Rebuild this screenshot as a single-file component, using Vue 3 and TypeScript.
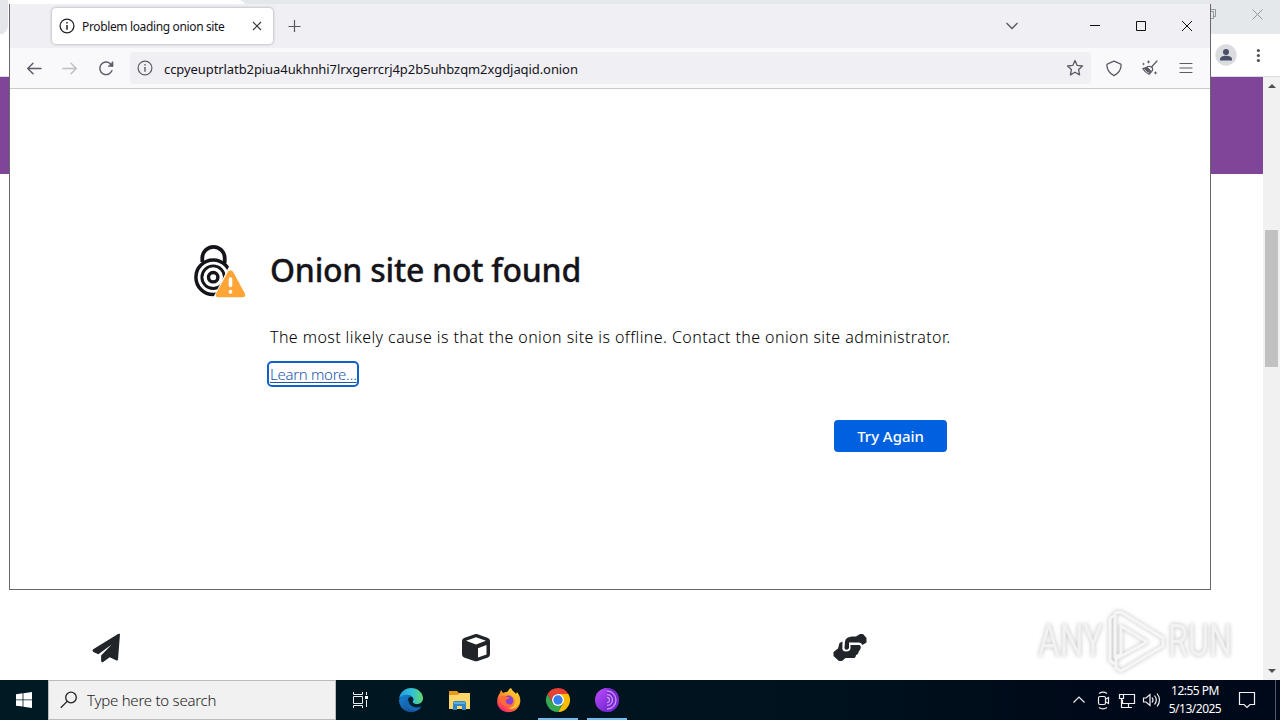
<script setup lang="ts">
interface TaskApp {
  name: string
  running: boolean
}

const address: string = 'ccpyeuptrlatb2piua4ukhnhi7lrxgerrcrj4p2b5uhbzqm2xgdjaqid.onion'
const apps: TaskApp[] = [
  { name: 'edge', running: false },
  { name: 'files', running: false },
  { name: 'firefox', running: false },
  { name: 'chrome', running: true },
  { name: 'tor', running: true },
]
</script>

<template>
  <div class="desktop">
    <section class="back">
      <header class="back-tabs">
        <i class="back-edge"></i>
        <i class="back-tab"></i>
        <i class="back-strip"></i>
        <svg class="back-controls" width="80" height="34" viewBox="1200 0 80 34" fill="none" stroke="#929599">
          <path d="M1207.5 11.500h6v7h-6zM1209.500 11.500v-2h6v7h-2" />
          <path d="M1252.500 9.500l10 10M1262.500 9.500l-10 10" />
        </svg>
      </header>
      <div class="back-toolbar">
        <svg width="80" height="42" viewBox="1200 34 80 42">
          <circle cx="1226" cy="55" r="10.700" fill="#dadce0" />
          <circle cx="1226" cy="51.900" r="3" fill="#4a4f68" />
          <path d="M1220 60.500v-1.300c0-4.600 12-4.600 12 0v1.300z" fill="#4a4f68" />
          <g fill="#505358"><circle cx="1258.400" cy="50.500" r="1.600" /><circle cx="1258.400" cy="55.500" r="1.600" /><circle cx="1258.400" cy="60.500" r="1.600" /></g>
        </svg>
      </div>
      <div class="back-body">
        <main class="page">
          <div class="banner"></div>
          <div class="features">
            <svg class="plane" width="30" height="30" viewBox="0 0 30 30">
              <path fill="#212529" d="M29 1L27 26.500Q26.800 28 25 27.200L18.700 24.300L12.200 29Q10 30 10.100 27.500V22.500L20.700 11.500L7.300 21.200L2.300 18.900Q.5 17.600 2.200 16.300L27 1.100Q28.200.3 29 1Z" />
            </svg>
            <svg class="cube" width="30" height="30" viewBox="0 0 30 30">
              <path fill="#212529" fill-rule="evenodd" d="M14.500 1Q15 .8 16 1.100L27 5Q29 5.800 29 8V21.500Q29 23.700 27 24.600L16 28.200Q15 28.500 14 28.200L3 24.600Q1 23.700 1 21.500V8Q1 5.800 3 5L14.500 1ZM15 4.300L5 7.800L15 11.500L25 7.800ZM17 15.200V24.600L25.500 21.600V12.100Z" />
            </svg>
            <svg class="hands" width="34" height="30" viewBox="0 0 34 30">
              <g fill="#212529">
                <path d="M.5 19L5 15.500L6.500 10L9.500 8.500L9.300 15.500Q9.500 18.500 13 18.500Q17 18.500 17.500 15.500V12L26.500 12Q28 12.500 27.800 14.500L27 17Q25.500 17.500 25.500 19.500Q25 21.500 23 22Q23 24 21.500 25H12.500L9 28H6L.5 23Z" />
                <path d="M12 8.500Q12.300 5.500 15 4.500L18.500 3.500L23 3.500L27 1H30L33.500 5V9.500L29.500 12Q28.500 9.500 26 9.500H16V15Q15.500 16.800 13.500 16.800Q11.500 16.500 11.500 15Z" />
              </g>
            </svg>
          </div>
        </main>
        <aside class="scroll">
          <i class="arrow up"></i><i class="thumb"></i><i class="arrow down"></i>
        </aside>
      </div>
    </section>

    <section class="window">
      <header class="tabbar">
        <div class="tab">
          <svg width="16" height="16" viewBox="0 0 16 16" fill="none" stroke="#222229" stroke-width="1.300"><circle cx="8" cy="8" r="6.900" /><path d="M8 7v4.800M8 4v1.600" stroke-width="1.500" /></svg>
          <span class="tab-title">Problem loading onion site</span>
          <svg class="tab-close" width="10" height="10" viewBox="0 0 10 10" fill="none" stroke="#35353d" stroke-width="1.100"><path d="M1 1l8 8M9 1L1 9" /></svg>
        </div>
        <svg class="plus" width="14" height="14" viewBox="0 0 14 14" stroke="#56565e" stroke-width="1.200"><path d="M6.500 1v12M.5 7.500h12" /></svg>
        <svg class="controls" width="210" height="44" viewBox="1000 4 210 44" fill="none">
          <path d="M1006.500 23l5.500 5.500 5.500-5.500" stroke="#56565e" stroke-width="1.300" />
          <g stroke="#111"><path d="M1090 25.500h10M1136.500 21.500h9v9h-9zM1182 21l10 10M1192 21l-10 10" /></g>
        </svg>
      </header>
      <div class="toolbar">
        <svg width="120" height="40" viewBox="10 48 120 40" fill="none" stroke="#5b5b66" stroke-width="1.400" stroke-linecap="round" stroke-linejoin="round">
          <path d="M41 68.500H27.800M33 63.200l-5.300 5.300 5.300 5.300" />
          <path d="M63 68.500h13.200M71 63.200l5.300 5.300-5.300 5.300" stroke="#bdbdc3" />
          <path d="M112 70.600a6.300 6.300 0 1 1-1.600-6.900l2.100 2.100" /><path d="M113 61.800v4.600h-4.600z" fill="#5b5b66" stroke-width=".6" />
        </svg>
        <div class="urlbar">
          <svg width="16" height="16" viewBox="0 0 16 16" fill="none" stroke="#5b5b66" stroke-width="1.200"><circle cx="8" cy="8" r="6.900" /><path d="M8 7v4.800M8 4v1.600" stroke-width="1.400" /></svg>
          <span class="address">{{ address }}</span>
          <svg class="star" width="18" height="18" viewBox="0 0 18 18" fill="none" stroke="#5b5b66" stroke-width="1.300" stroke-linejoin="round"><path d="M9 1.500l2.200 4.900 5.300.6-3.900 3.600 1 5.300L9 13.300l-4.600 2.600 1-5.300L1.500 7l5.300-.6z" /></svg>
        </div>
        <svg width="119" height="40" viewBox="1091 48 119 40" fill="none" stroke="#5b5b66" stroke-width="1.300" stroke-linecap="round">
          <path d="M1114 61.200l6.300 2.600c.9.400 1 1.200.8 2.100-.5 4.400-2.900 7.700-7.100 9.800-4.200-2.100-6.600-5.400-7.100-9.800-.2-.9-.1-1.700.8-2.100z" stroke-linejoin="round" />
          <path d="M1157 61l-5.500 6" />
          <path d="M1147.500 66.500q3-.8 4.800 1.200 1 2-.5 3.700l-2.500 2.800M1143 68.700q2 3.800 6 5.600l1.500-3.300-3.700-3.700zM1145 68.500l2.500 3" stroke-width="1.200" />
          <path d="M1144.500 68.700l2.500-1.700 3.300 3.500-1.300 2.500z" fill="#5b5b66" stroke="none" />
          <g stroke="none" fill="#5b5b66"><path d="M1148.500 60l.6 1.300 1.300.6-1.300.6-.6 1.300-.6-1.300-1.300-.6 1.300-.6zM1143.500 62.500l.5 1 1 .5-1 .5-.5 1-.5-1-1-.5 1-.5zM1155.500 71l.6 1.300 1.300.6-1.300.6-.6 1.300-.6-1.300-1.300-.6 1.300-.6z" /></g>
          <path d="M1180 63.500h12M1180 68h12M1180 72.500h12" stroke-width="1.200" />
        </svg>
      </div>
      <main class="error">
        <svg class="error-icon" width="54" height="54" viewBox="0 0 54 54" fill="none">
          <g stroke="#15141a">
            <path d="M9.300 18V14a11.200 11.200 0 0 1 22.400 0v5" stroke-width="3.800" />
            <circle cx="20.200" cy="33.200" r="17.300" stroke-width="3.500" />
            <circle cx="20.200" cy="33.200" r="11.300" stroke-width="2.900" />
            <circle cx="20.200" cy="33.200" r="4.700" stroke-width="3.400" />
          </g>
          <path d="M36 22.500L20 54H54V22.500Z" fill="#fff" />
          <path d="M37.500 26.300Q39.300 26.300 40.200 28L51.900 49.500Q53.200 53.200 49.700 53.200H25.300Q21.800 53.200 23.100 49.500L34.800 28Q35.700 26.300 37.500 26.300Z" fill="#ffa537" />
          <path d="M37.500 35v6.500M37.500 47.500v.4" stroke="#fff" stroke-width="3.600" stroke-linecap="round" />
        </svg>
        <div class="message">
          <h1><span>Onion site not found</span></h1>
          <p class="cause">The most likely cause is that the onion site is offline. Contact the onion site administrator.</p>
          <a class="learn"><span>Learn more…</span></a>
          <button class="retry">Try Again</button>
        </div>
      </main>
    </section>

    <div class="watermark">
      <span class="mark">ANY</span>
      <svg width="60" height="72" viewBox="1106 605 60 72">
        <g class="play" fill="none" stroke-linejoin="round">
          <path d="M1121 612l42 26v8l-42 25-5-3v-9l31-17-26-16v28l-6 3v-44z" />
          <path d="M1110 618v43l7 4M1110 618l6-3" />
        </g>
      </svg>
      <span class="mark">RUN</span>
    </div>

    <footer class="taskbar">
      <div class="start">
        <svg width="16" height="16" viewBox="0 0 16 16" fill="#fff"><path d="M0 2.200l6.600-.9v6.200H0zM7.400 1.200L16 0v7.500H7.400zM0 8.300h6.600v6.300L0 13.700zM7.400 8.300H16V16l-8.600-1.200z" /></svg>
      </div>
      <div class="search">
        <svg width="18" height="18" viewBox="0 0 18 18" fill="none" stroke="#222" stroke-width="1.300"><circle cx="11" cy="6.500" r="5.300" /><path d="M7.100 10.400L.8 16.800" /></svg>
        <span>Type here to search</span>
      </div>
      <div class="cell taskview">
        <svg width="17" height="17" viewBox="0 0 17 17" fill="none" stroke="#eee"><path d="M1.500 5.500h9v7h-9zM1.500 1v2.500h9V1M1.500 17v-2.500h9V17M14.500 1v3M14.500 9v7" /><path d="M13 5h3v3h-3z" fill="#fff" stroke="none" /></svg>
      </div>
      <div v-for="app in apps" :key="app.name" class="cell" :class="{ running: app.running }">
        <svg v-if="app.name === 'edge'" width="26" height="26" viewBox="0 0 26 26">
          <defs>
            <linearGradient id="edge-top" x1="0" x2="1"><stop stop-color="#249be0" /><stop offset=".55" stop-color="#31c2d5" /><stop offset="1" stop-color="#65d66b" /></linearGradient>
            <linearGradient id="edge-low" x1="0" x2="1" y1="0" y2="1"><stop stop-color="#168bdc" /><stop offset="1" stop-color="#123e80" /></linearGradient>
          </defs>
          <path d="M1 13A12 12 0 0 1 15 5l6 9 2.500 5A12 12 0 0 1 1 13Z" fill="url(#edge-low)" />
          <path d="M1 12C2 5 7 1 13 1c7 0 12 5 12 10 0 4-3 6-6 6-3 0-5-1-4-3 1-1 .5-5-4-6C7 7 3 8 1 12Z" fill="url(#edge-top)" />
          <path d="M10 13c0-2.500 3-4.500 5-2 1 1.500 0 2.500-.5 3.500 0 2 3 3 6 2.500l3.500-1-1 3.500C18 22 10 20 10 13Z" fill="#03202f" />
          <path d="M10 12c-4 5 0 12 7 12 3-.5 5-2 6-4-6 2-12.500-1-13-8Z" fill="#1768af" />
        </svg>
        <svg v-else-if="app.name === 'files'" width="24" height="24" viewBox="0 0 24 24">
          <path d="M1 3h8l2 2h11v5H1z" fill="#e69a19" /><path d="M1 7h9l2-2h10v16H1z" fill="#ffd768" /><path d="M5 22v-7q0-2 2-2h9q2 0 2 2v7h-4v-4H9v4z" fill="#3187c5" /><path d="M6 14h11v2H6z" fill="#59addf" />
        </svg>
        <svg v-else-if="app.name === 'firefox'" width="26" height="26" viewBox="0 0 26 26">
          <defs><linearGradient id="fox" x1=".85" y1="0" x2=".15" y2="1"><stop stop-color="#ffe83c" /><stop offset=".45" stop-color="#ff9826" /><stop offset=".8" stop-color="#ff4354" /><stop offset="1" stop-color="#e5178c" /></linearGradient></defs>
          <path d="M15 1c1 3 4 4 5 6l1-2c4 5 4 10 2 14a12 12 0 0 1-21 0C0 14 2 8 4 6l1-3 2 3c1-1 3-1 4-1 1-1 2-3 4-4Z" fill="url(#fox)" />
          <circle cx="12.500" cy="13.500" r="5" fill="#8b3fd2" /><path d="M4 10c3-2 5 0 8 0l2 1-4 2c-1 3 2 5 5 4-3 5-12 2-11-7Z" fill="#ff6b38" /><path d="M12 6c3 0 6 2 7 5 2 5-2 10-7 10 5 3 12-1 11-8-1-5-5-7-8-11z" fill="#ffbd2d" />
        </svg>
        <svg v-else-if="app.name === 'chrome'" width="26" height="26" viewBox="0 0 26 26">
          <path d="M13 13V7h10.400A12 12 0 0 1 13 25l5.200-9Z" fill="#fbbc04" /><path d="M13 25A12 12 0 0 1 2.600 7l5.200 9 5.200 3 5.200-3Z" fill="#34a853" />
          <path d="M2.600 7A12 12 0 0 1 23.400 7H13a6 6 0 0 0-5.200 9Z" fill="#e94235" />
          <circle cx="13" cy="13" r="6" fill="#fff" /><circle cx="13" cy="13" r="4.700" fill="#347ef0" />
        </svg>
        <svg v-else width="26" height="26" viewBox="0 0 26 26">
          <defs><linearGradient id="onion" x2="1" y2="1"><stop stop-color="#c34cff" /><stop offset="1" stop-color="#581ac0" /></linearGradient></defs>
          <circle cx="13" cy="13" r="12" fill="url(#onion)" /><path d="M13 1a12 12 0 0 1 0 24z" fill="#7a2bd0" />
          <g fill="none" stroke="#cf93ff" stroke-width="1.300"><path d="M13 4a9 9 0 0 1 0 18M13 7.500a5.500 5.500 0 0 1 0 11M13 10.500a2.500 2.500 0 0 1 0 5" /></g>
        </svg>
      </div>
      <svg class="tray" width="96" height="40" viewBox="1067 680 96 40" fill="none" stroke="#eee" stroke-width="1.200">
        <path d="M1073.500 702.500l5.500-5.500 5.500 5.500" />
        <rect x="1098.500" y="696.500" width="7" height="8" rx="1.500" /><path d="M1106 699l2.500-1.500v6L1106 702M1099 693.500q4-2.600 8 0M1099 707.500q4 2.600 8 0" />
        <path d="M1124 694.500h10.500v9h-12v-4M1128.500 704v3.500M1124 707.500h8M1119.500 694.500h4v4h-4zM1121.500 699v8.500h3" />
        <path d="M1143.500 698h2.500l4-3.500v11l-4-3.500h-2.500zM1152 697.500q2 2.500 0 5M1154.500 695.500q3.600 4.500 0 9M1157 693.500q5 6.500 0 13" />
      </svg>
      <div class="clock"><span class="time">12:55 PM</span><span class="date">5/13/2025</span></div>
      <svg class="notice" width="48" height="40" viewBox="1232 680 48 40" fill="none" stroke="#f2f2f2" stroke-width="1.200"><path d="M1239.500 692.500h15v12h-4.500l-3 3-3-3h-4.500z" /><path d="M1275.500 680v40" stroke="#53586b" stroke-width="1" /></svg>
    </footer>
  </div>
</template>

<style>
html, body { overflow: hidden; background: #fff; }
</style>

<style scoped>
* { box-sizing: border-box; }
svg { display: block; flex: none; }
.desktop { position: relative; width: 1280px; height: 720px; overflow: hidden; display: grid; grid-template-rows: 680px 40px; font-family: "Noto Sans", "Open Sans", sans-serif; color: #15141a; }
span, p, h1 { white-space: nowrap; }
.back { display: grid; grid-template-rows: 34px 43px 603px; }
.back-tabs { display: flex; background: #e5e8eb; }
.back-edge { width: 8px; background: #e5e6e9; border-bottom-right-radius: 8px; box-shadow: 4px 12px 0 #fff; }
.back-tab { width: 238px; background: #fff; border-top-right-radius: 8px; }
.back-strip { flex: 1; }
.back-toolbar { display: flex; justify-content: flex-end; background: #fff; border-bottom: 1px solid #dcdde0; }
.back-body { display: grid; grid-template-columns: 1263px 17px; }
.page { display: flex; flex-direction: column; background: #fff; }
.banner { height: 97px; background: #7f4598; }
.features { display: flex; margin-top: 459px; padding-left: 91px; }
.cube { margin-left: 340px; }
.hands { margin-left: 342px; }
.scroll { display: flex; flex-direction: column; align-items: center; background: #f1f1f1; }
.arrow { width: 0; height: 0; border: 4px solid transparent; }
.up { margin-top: 3px; border-bottom-color: #505050; }
.down { margin-top: 302px; border-top-color: #505050; }
.thumb { width: 13px; height: 137px; margin-top: 142px; background: #c1c1c1; }
.window { position: absolute; left: 9px; top: 4px; width: 1202px; height: 586px; display: flex; flex-direction: column; background: #fff; border: solid #68686c; border-width: 0 1px 1px; }
.tabbar { height: 44px; flex: none; display: flex; align-items: center; padding-left: 42px; background: #f0f0f4; }
.tab { width: 221px; height: 36px; display: flex; align-items: center; padding-left: 7px; background: #fff; border-radius: 4px; box-shadow: 0 0 3px #96969f; }
.tab-title { width: 143px; margin: 1px 27px 0 7px; font-size: 12px; letter-spacing: -.36px; }
.plus { margin-left: 15px; }
.controls { margin-left: auto; }
.toolbar { height: 41px; flex: none; display: flex; background: #f9f9fb; border-bottom: 1px solid #c9c9ce; }
.urlbar { width: 961px; height: 32px; margin-top: 4px; display: flex; align-items: center; padding-left: 7px; border-radius: 4px; background: #f0f0f4; }
.address { margin: 2px 0 0 11px; font-size: 13px; letter-spacing: -.08px; }
.star { margin: 0 7px 0 auto; }
.error { display: flex; padding: 155px 0 0 183px; }
.message { width: 681px; margin-left: 23px; display: flex; flex-direction: column; align-items: flex-start; }
h1 { height: 50px; margin: 0; font-size: 32px; line-height: 51px; font-weight: 500; letter-spacing: -.25px; -webkit-text-stroke: .3px #15141a; }
.cause { height: 24px; margin: 31px 0 0; line-height: 24px; font-size: 16px; font-weight: 300; letter-spacing: .415px; color: #000; }
.learn { width: 92px; height: 26px; margin: 12px 0 0 -3px; padding-left: 1px; border: 2px solid #1062c8; border-radius: 5px; color: #1b56aa; font-size: 15px; font-weight: 300; line-height: 23px; letter-spacing: -.3px; text-decoration: underline; text-underline-offset: 2px; }
.retry { width: 113px; height: 32px; margin: 33px 4px 0 auto; padding: 0; border: 0; border-radius: 4px; background: #0061e0; color: #fff; font: 500 15px/32px "Noto Sans", sans-serif; letter-spacing: -.05px; }
.watermark { position: absolute; left: 1038px; top: 605px; width: 200px; height: 72px; display: grid; grid-template-columns: 68px 60px 72px; align-items: center; filter: drop-shadow(0 0 2px rgba(0, 0, 0, .26)); }
.mark { font: 400 45px/60px "Roboto", sans-serif; color: #f2f2f2; transform: scaleX(.74); transform-origin: left; }
.play { stroke: #f6f6f6; stroke-width: 3; }
.mark:last-child { margin-left: 2px; transform: scaleX(.72); }
.taskbar { display: flex; background: linear-gradient(90deg, #001a23, #00121e 65%, #000919 85%); }
.start { width: 48px; display: grid; place-items: center; }
.search { width: 288px; display: flex; align-items: center; padding-left: 11px; background: #f1f1f1; border: 1px solid #bbb; color: #222; }
.search span { margin-left: 9px; font-size: 15px; font-weight: 300; letter-spacing: -.24px; }
.cell { width: 49px; display: grid; place-items: center; border-bottom: 2px solid transparent; padding-top: 2px; }
.taskview { width: 50px; padding-right: 2px; padding-top: 1px; }
.running { background: linear-gradient(#76b9ed, #76b9ed) center bottom / 40px 2px no-repeat border-box; }
.tray { margin-left: auto; }
.clock { width: 69px; display: flex; flex-direction: column; align-items: center; padding: 2px 0 0; color: #fff; font-size: 12px; line-height: 18px; letter-spacing: -.5px; }
.time, .date { margin-right: 5px; }
</style>
